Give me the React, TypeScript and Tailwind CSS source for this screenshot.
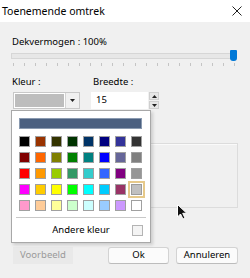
const palette = [
    ['#000000', '#993300', '#333300', '#003300', '#003366', '#000080', '#333399', '#333333'],
    ['#800000', '#ff6600', '#808000', '#008000', '#008080', '#0000ff', '#666699', '#808080'],
    ['#ff0000', '#ff9900', '#99cc00', '#339966', '#33cccc', '#3366ff', '#800080', '#969696'],
    ['#ff00ff', '#ffcc00', '#ffff00', '#00ff00', '#00ffff', '#00ccff', '#993366', '#c0c0c0'],
    ['#ff99cc', '#ffcc99', '#ffff99', '#ccffcc', '#ccffff', '#99ccff', '#cc99ff', '#ffffff'],
];

const ticks = Array.from({ length: 21 }, (_, i) => i);

const Slider = () => (
    <div className="pl-[11px] pr-[13px]">
        <div className="flex items-center h-[11px]">
            <div className="flex-1 h-[6px] bg-[#e7e7e7] border border-[#d6d6d6]" />
            <div className="w-[7px] h-[11px] -ml-[6px] bg-[#0078d7] rounded-b-[3px] rounded-t-[1px]" />
        </div>
        <div className="flex justify-between mt-[2px] px-[2px]">
            {ticks.map((t) => (
                <div key={t} className="w-px h-[3px] bg-[#c4c4c4]" />
            ))}
        </div>
    </div>
);

const ColorPopup = () => (
    <div className="absolute left-[11px] top-[110px] w-[140px] h-[133px] bg-white border border-[#a8a8a8] shadow-[2px_2px_3px_rgba(0,0,0,0.15)] flex flex-col">
        <div className="mt-[7px] ml-[7px] w-[123px] h-[11px] bg-[#4b6080] border border-[#8a9ab0]" />
        <div className="mt-[7px] ml-[7px] grid grid-cols-[repeat(8,11px)] gap-[5px]">
            {palette.flat().map((c, i) => (
                <div
                    key={i}
                    className={`w-[11px] h-[11px] border ${
                        i === 31 ? 'border-[#9c9c9c] outline outline-2 outline-offset-1 outline-[#e6c98a]' : 'border-[#a0a0a0]'
                    }`}
                    style={{ backgroundColor: c }}
                />
            ))}
        </div>
        <div className="mt-[6px] mx-[4px] h-[2px] border-t border-[#c8c8c8] border-b border-b-white" />
        <div className="flex items-center h-[22px] relative">
            <span className="flex-1 text-center text-[9.5px] text-black leading-none -mt-[1px]">Andere kleur</span>
            <div className="absolute right-[7px] w-[11px] h-[11px] border border-[#b4b4b4] bg-[#f4f4f4]" />
        </div>
    </div>
);

const App = () => {
    return (
        <div
            className="w-[250px] h-[278px] bg-[#f0f0f0] relative overflow-hidden text-black text-[9.5px]"
            style={{ fontFamily: '"Noto Sans", "Open Sans", sans-serif' }}
        >
            <div className="h-[22px] bg-white flex items-center justify-between pl-[2px] pr-[8px]">
                <span className="text-[10.5px] leading-none">Toenemende omtrek</span>
                <svg width="10" height="10" viewBox="0 0 10 10">
                    <path d="M0.5 0.5 L9.5 9.5 M9.5 0.5 L0.5 9.5" stroke="#222" strokeWidth="1" />
                </svg>
            </div>

            <div className="pt-[12px] pl-[12px] leading-[16px]">Dekvermogen : 100%</div>
            <Slider />

            <div className="flex mt-[8px] leading-[16px]">
                <span className="ml-[12px] w-[81px]">Kleur :</span>
                <span>Breedte :</span>
            </div>

            <div className="flex mt-[2px] h-[17px]">
                <div className="ml-[13px] w-[67px] h-[17px] bg-white border border-[#c8c8c8] flex">
                    <div className="m-px flex-1 bg-[#bdbdbd]" />
                    <div className="w-[14px] flex items-center justify-center bg-[#f0f0f0] border-l border-[#d4d4d4]">
                        <svg width="5" height="3" viewBox="0 0 5 3">
                            <path d="M0 0 H5 L2.5 3 Z" fill="#222" />
                        </svg>
                    </div>
                </div>
                <div className="ml-[11px] w-[57px] h-[17px] bg-white flex items-center pl-[5px]">15</div>
                <div className="ml-px w-[10px] flex flex-col gap-px">
                    <div className="h-[8px] bg-[#e6e6e6] border border-[#cfcfcf] flex items-center justify-center">
                        <svg width="5" height="3" viewBox="0 0 5 3">
                            <path d="M0 3 H5 L2.5 0 Z" fill="#222" />
                        </svg>
                    </div>
                    <div className="h-[8px] bg-[#e6e6e6] border border-[#cfcfcf] flex items-center justify-center">
                        <svg width="5" height="3" viewBox="0 0 5 3">
                            <path d="M0 0 H5 L2.5 3 Z" fill="#222" />
                        </svg>
                    </div>
                </div>
            </div>

            <div className="mt-[34px] ml-[12px] w-[226px] h-[65px] border border-[#dcdcdc] shadow-[inset_1px_1px_0_#fafafa]" />

            <div className="flex mt-[39px] h-[17px]">
                <div className="ml-[13px] w-[60px] bg-[#e9e9e9] text-[#9a9a9a] flex items-center justify-center">Voorbeeld</div>
                <div className="ml-[35px] w-[61px] bg-[#fbfbfb] border border-[#d3d3d3] border-b-[#bcbcbc] rounded-[3px] flex items-center justify-center">
                    Ok
                </div>
                <div className="ml-[7px] w-[62px] bg-[#fbfbfb] border border-[#d3d3d3] border-b-[#bcbcbc] rounded-[3px] flex items-center justify-center">
                    Annuleren
                </div>
            </div>

            <ColorPopup />

            <svg className="absolute left-[177px] top-[204px]" width="11" height="16" viewBox="0 0 11 16">
                <path d="M0.5 0.5 V13 L3.5 10 L6 15 L8 14 L5.7 9.3 H9.8 Z" fill="#111" stroke="#fff" strokeWidth="1" />
            </svg>
        </div>
    );
};

export default App;
